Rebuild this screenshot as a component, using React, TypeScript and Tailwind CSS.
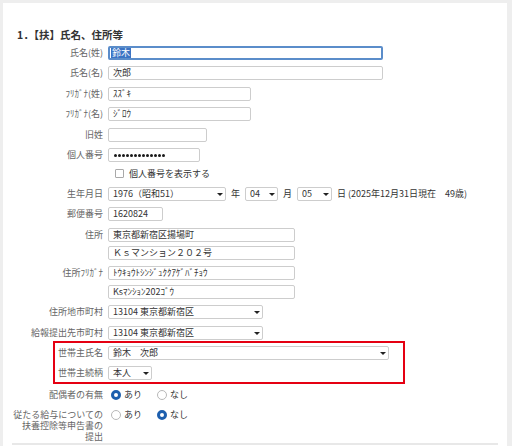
import type { ReactNode } from "react";

function Caret() {
  return <span className="ml-auto h-0 w-0 shrink-0 border-x-[3px] border-t-[3px] border-x-transparent border-t-[#222]" />;
}

function Field({ w, children, select = false }: { w: string; children?: ReactNode; select?: boolean }) {
  return (
    <div
      className={`flex h-[14px] shrink-0 items-center rounded-[2px] border border-[#cdcdcd] bg-white pl-[4px] leading-[12px] text-[#333] ${
        select ? "pr-[2px]" : "pr-[4px]"
      } ${w}`}
    >
      <span className="whitespace-pre">{children}</span>
      {select && <Caret />}
    </div>
  );
}

function Row({ h, label, children, labelW = "w-[91px]" }: { h: string; label?: ReactNode; children?: ReactNode; labelW?: string }) {
  return (
    <div className={`flex items-start gap-[5px] ${h}`}>
      <div className={`${labelW} shrink-0 text-right leading-[14px] text-[#666]`}>{label}</div>
      <div className="flex items-center">{children}</div>
    </div>
  );
}

function Radio({ checked, label }: { checked: boolean; label: string }) {
  return (
    <div className="flex items-center gap-[3px]">
      {checked ? (
        <span className="h-[10px] w-[10px] shrink-0 rounded-full border-[3px] border-[#1d5fae] bg-white" />
      ) : (
        <span className="h-[10px] w-[10px] shrink-0 rounded-full border border-[#b8b8b8] bg-white" />
      )}
      <span className="leading-[11px] text-[#333]">{label}</span>
    </div>
  );
}

// masked 個人番号, 13 digits
const MASK = Array.from({ length: 13 });

export default function App() {
  return (
    <div className="h-[446px] w-[512px] overflow-hidden bg-[#eeeeee] pl-[3px] pt-[3px] font-['Noto_Sans_CJK_JP',sans-serif] text-[9px]">
      <div className="h-[443px] w-[504px] bg-white px-[9px] pt-[20px]">
        <div className="border-b-2 border-[#e8e8e8]">
          <div className="flex h-[23px] items-center pl-[5px] text-[10.5px] font-bold text-[#333]">1．【扶】氏名、住所等</div>

          <Row h="h-[20px]" label="氏名(姓)">
            <div className="flex h-[14px] w-[275px] items-center rounded-[2px] border-2 border-[#5b8dca] bg-white pl-[1px]">
              <span className="bg-[#3b74c4] px-[1px] leading-[10px] text-white">鈴木</span>
            </div>
          </Row>
          <Row h="h-[21px]" label="氏名(名)">
            <Field w="w-[275px]">次郎</Field>
          </Row>
          <Row h="h-[20px]" label="ﾌﾘｶﾞﾅ(姓)">
            <Field w="w-[143px]">ｽｽﾞｷ</Field>
          </Row>
          <Row h="h-[21px]" label="ﾌﾘｶﾞﾅ(名)">
            <Field w="w-[143px]">ｼﾞﾛｳ</Field>
          </Row>
          <Row h="h-[20px]" label="旧姓">
            <Field w="w-[99px]" />
          </Row>
          <Row h="h-[20px]" label="個人番号">
            <div className="flex h-[14px] w-[92px] items-center gap-[1px] rounded-[2px] border border-[#cdcdcd] bg-white pl-[5px]">
              {MASK.map((_, i) => (
                <span key={i} className="h-[3px] w-[3px] rounded-full bg-[#1a1a1a]" />
              ))}
            </div>
          </Row>
          <div className="h-[19px] pl-[103px]">
            <div className="flex h-[11px] items-center gap-[5px]">
              <span className="h-[9px] w-[9px] shrink-0 rounded-[1px] border border-[#a9a9a9] bg-white" />
              <span className="leading-[11px] text-[#333]">個人番号を表示する</span>
            </div>
          </div>
          <Row h="h-[20px]" label="生年月日">
            <div className="flex items-center gap-[5px] text-[#333]">
              <Field w="w-[118px]" select>
                1976（昭和51）
              </Field>
              <span className="leading-[14px]">年</span>
              <Field w="w-[33px]" select>
                04
              </Field>
              <span className="leading-[14px]">月</span>
              <Field w="w-[35px]" select>
                05
              </Field>
              <span className="leading-[14px]">日</span>
              <span className="-ml-[3px] leading-[14px]">(2025年12月31日現在　49歳)</span>
            </div>
          </Row>
          <Row h="h-[21px]" label="郵便番号">
            <Field w="w-[55px]">1620824</Field>
          </Row>
          <Row h="h-[18px]" label="住所">
            <Field w="w-[187px]">東京都新宿区揚場町</Field>
          </Row>
          <Row h="h-[20px]">
            <Field w="w-[187px]">Ｋｓマンション２０２号</Field>
          </Row>
          <Row h="h-[19px]" label="住所ﾌﾘｶﾞﾅ">
            <Field w="w-[187px]">ﾄｳｷｮｳﾄｼﾝｼﾞｭｸｸｱｹﾞﾊﾞﾁｮｳ</Field>
          </Row>
          <Row h="h-[20px]">
            <Field w="w-[187px]">Ksﾏﾝｼｮﾝ202ｺﾞｳ</Field>
          </Row>
          <Row h="h-[21px]" label="住所地市町村">
            <Field w="w-[155px]" select>
              13104 東京都新宿区
            </Field>
          </Row>
          <Row h="h-[15px]" label="給報提出先市町村">
            <Field w="w-[155px]" select>
              13104 東京都新宿区
            </Field>
          </Row>

          <div className="ml-[41px] w-[352px] border-2 border-[#e50012] pb-[2px] pt-[3px]">
            <Row h="h-[20px]" label="世帯主氏名" labelW="w-[48px]">
              <Field w="w-[281px]" select>
                鈴木　次郎
              </Field>
            </Row>
            <Row h="h-[14px]" label="世帯主続柄" labelW="w-[48px]">
              <Field w="w-[44px]" select>
                本人
              </Field>
            </Row>
          </div>

          <div className="flex h-[21px] items-center gap-[5px]">
            <div className="w-[91px] shrink-0 text-right leading-[14px] text-[#666]">配偶者の有無</div>
            <div className="flex items-center gap-[15px] pl-[3px]">
              <Radio checked label="あり" />
              <Radio checked={false} label="なし" />
            </div>
          </div>

          <div className="flex items-start gap-[5px] pb-[1px] pt-[4px]">
            <div className="w-[91px] shrink-0 text-right leading-[11px] text-[#666]">
              従たる給与についての
              <br />
              扶養控除等申告書の
              <br />
              提出
            </div>
            <div className="flex h-[11px] items-center gap-[15px] pl-[3px]">
              <Radio checked={false} label="あり" />
              <Radio checked label="なし" />
            </div>
          </div>
        </div>
      </div>
    </div>
  );
}
